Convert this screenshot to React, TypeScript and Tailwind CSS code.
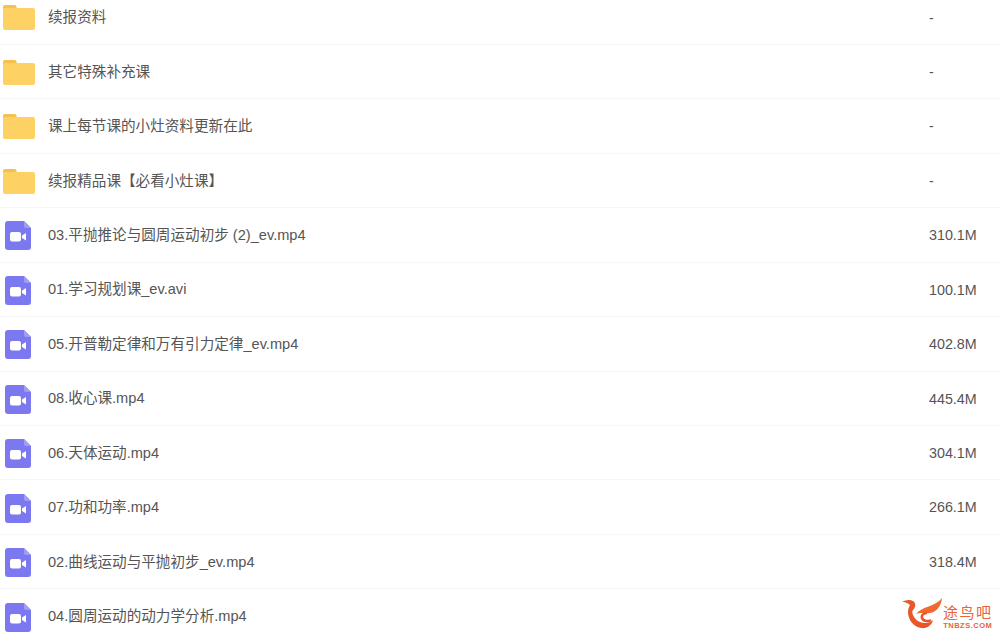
const ROWS = [
  { type: "folder", name: "续报资料", size: "-" },
  { type: "folder", name: "其它特殊补充课", size: "-" },
  { type: "folder", name: "课上每节课的小灶资料更新在此", size: "-" },
  { type: "folder", name: "续报精品课【必看小灶课】", size: "-" },
  { type: "video", name: "03.平抛推论与圆周运动初步 (2)_ev.mp4", size: "310.1M" },
  { type: "video", name: "01.学习规划课_ev.avi", size: "100.1M" },
  { type: "video", name: "05.开普勒定律和万有引力定律_ev.mp4", size: "402.8M" },
  { type: "video", name: "08.收心课.mp4", size: "445.4M" },
  { type: "video", name: "06.天体运动.mp4", size: "304.1M" },
  { type: "video", name: "07.功和功率.mp4", size: "266.1M" },
  { type: "video", name: "02.曲线运动与平抛初步_ev.mp4", size: "318.4M" },
  { type: "video", name: "04.圆周运动的动力学分析.mp4", size: "" },
];

const FolderIcon = () => (
  <svg width="32" height="26" viewBox="0 0 32 26">
    <path d="M0 3a2 2 0 0 1 2-2h9.500a2 2 0 0 1 1.800 1.100L14 5H2L0 5z" fill="#f5c04e" />
    <rect x="0" y="4" width="32" height="22" rx="2" fill="#fed164" />
  </svg>
);

const VideoIcon = () => (
  <svg width="26" height="29" viewBox="0 0 26 29">
    <path d="M3 0h16l7 7v19a3 3 0 0 1-3 3H3a3 3 0 0 1-3-3V3a3 3 0 0 1 3-3z" fill="#7b78f0" />
    <path d="M19 0l7 7h-5a2 2 0 0 1-2-2z" fill="#a09df6" />
    <rect x="5" y="11" width="11" height="9.500" rx="2" fill="#fff" />
    <path d="M17 14.500l4-2.500v7.500l-4-2.500z" fill="#fff" />
  </svg>
);

const Watermark = () => (
  <div className="absolute left-[902px] top-[598px] flex items-end gap-[1px]">
    <svg width="40" height="34" viewBox="0 0 40 34">
      <path d="M0 3.500C4 2 8 1 11 3c3 2 3 6 0 9-1 1-1 3 0 5 2 5 7 8 12 8 3 0 6-1 8-3-1 5-6 9-12 8C11 29 6 21 6 14c0-3 1-5 2-7-2-2-5-3-8-3.500z" fill="#e8562a" />
      <path d="M14 16C20 8 33 9 40 0c-1 9-6 14-12 15-5 1-9-1-14 1z" fill="#ee6a30" />
      <path d="M29 22c-3 2-8 1-9-2-1-3 2-5 5-5" fill="none" stroke="#e8562a" strokeWidth="2.500" />
    </svg>
    <div className="mb-[2px] flex flex-col items-center text-[#e8643a]">
      <span className="text-[15px] leading-[17px] tracking-[1.500px]">途鸟吧</span>
      <span className="font-['Liberation_Sans',sans-serif] text-[7.500px] font-bold leading-[9px] tracking-[0.5px]">TNBZS.COM</span>
    </div>
  </div>
);

export default function App() {
  return (
    <div className="relative h-[634px] w-[1000px] overflow-hidden bg-white font-['Liberation_Sans','Noto_Sans_CJK_SC',sans-serif] text-[14.600px] text-[#555]">
      <div className="-mt-[9.500px]">
        {ROWS.map((row, i) => (
          <div key={i} className="flex h-[54.450px] items-center border-b border-[#f7f7f7]">
            <div className="flex w-[48px] shrink-0 pl-[3px]">
              {row.type === "folder" ? <FolderIcon /> : <div className="pl-[2px] pt-[2px]"><VideoIcon /></div>}
            </div>
            <div className="flex-1 truncate pt-[2px]">{row.name}</div>
            <div className="w-[71px] shrink-0 pt-[2px] text-[14.300px]">{row.size}</div>
          </div>
        ))}
      </div>
      <Watermark />
    </div>
  );
}
